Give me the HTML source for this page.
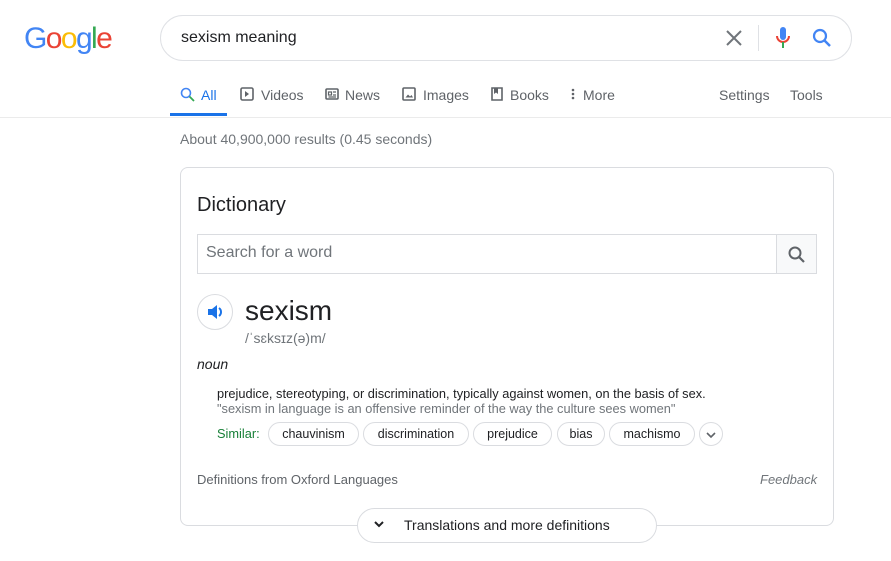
<!DOCTYPE html>
<html><head><meta charset="utf-8"><style>
*{margin:0;padding:0;box-sizing:border-box}
body{width:891px;height:561px;background:#fff;font-family:"Liberation Sans",Arial,sans-serif;position:relative;overflow:hidden;color:#202124}
.abs{position:absolute}
.logo{left:24px;top:22px;font-size:30px;letter-spacing:-1.6px;font-family:"Liberation Sans",sans-serif}
.search{left:160px;top:15px;width:692px;height:46px;border:1px solid #dfe1e5;border-radius:24px}
.tabs span{position:absolute;top:87px;font-size:14px;color:#5f6368}
.tabs svg{position:absolute;top:87px}
.chip{position:absolute;top:422px;border:1px solid #dadce0;border-radius:16px;height:24px;line-height:22px;text-align:center;font-size:12.5px;color:#202124}
</style></head><body>
<div class="abs logo"><span style="color:#4285f4">G</span><span style="color:#ea4335">o</span><span style="color:#fbbc05">o</span><span style="color:#4285f4">g</span><span style="color:#34a853">l</span><span style="color:#ea4335">e</span></div>
<div class="abs search"></div>
<div class="abs" style="left:181px;top:29px;font-size:16px">sexism meaning</div>
<svg class="abs" style="left:725px;top:29px" width="18" height="18"><path d="M2 2L16 16M16 2L2 16" stroke="#70757a" stroke-width="2"/></svg>
<div class="abs" style="left:758px;top:25px;width:1px;height:26px;background:#dfe1e5"></div>
<svg class="abs" style="left:775px;top:26px" width="16" height="24"><rect x="5" y="1" width="6" height="13" rx="3" fill="#4285f4"/><path d="M2 10a6 6 0 0 0 12 0" stroke="#ea4335" stroke-width="2" fill="none"/><rect x="7" y="16" width="2" height="6" fill="#34a853"/></svg>
<svg class="abs" style="left:812px;top:28px" width="20" height="20"><circle cx="8" cy="8" r="6" stroke="#4285f4" stroke-width="2.2" fill="none"/><path d="M12.5 12.5L18 18" stroke="#4285f4" stroke-width="2.5"/></svg>
<div class="tabs">
<svg style="left:180px" width="15" height="15"><circle cx="6" cy="6" r="4.5" stroke="#4285f4" stroke-width="1.6" fill="none"/><path d="M9.5 9.5L14 14" stroke="#34a853" stroke-width="1.8"/></svg>
<span style="left:201px;color:#1a73e8">All</span>
<svg style="left:240px" width="14" height="14"><rect x="1" y="1" width="12" height="12" rx="1.5" stroke="#5f6368" stroke-width="1.6" fill="none"/><path d="M5 4l4 3-4 3z" fill="#5f6368"/></svg>
<span style="left:261px">Videos</span>
<svg style="left:325px" width="14" height="14"><rect x="1" y="2" width="12" height="10" rx="1" stroke="#5f6368" stroke-width="1.6" fill="none"/><path d="M3.5 5h3v3h-3zM8 5h3M8 8h3M3.5 10h7.5" stroke="#5f6368" stroke-width="1.2" fill="none"/></svg>
<span style="left:345px">News</span>
<svg style="left:402px" width="14" height="14"><rect x="1" y="1" width="12" height="12" rx="1" stroke="#5f6368" stroke-width="1.6" fill="none"/><path d="M3.5 10.5l2.5-3 2 2 1.5-1.5 1.5 2.5z" fill="#5f6368"/></svg>
<span style="left:423px">Images</span>
<svg style="left:491px" width="12" height="14"><path d="M1 1h10v12H1z" stroke="#5f6368" stroke-width="1.6" fill="none"/><path d="M3 1h4v6l-2-1.5L3 7z" fill="#5f6368"/></svg>
<span style="left:510px">Books</span>
<svg style="left:571px" width="4" height="14"><circle cx="2" cy="3" r="1.3" fill="#5f6368"/><circle cx="2" cy="7" r="1.3" fill="#5f6368"/><circle cx="2" cy="11" r="1.3" fill="#5f6368"/></svg>
<span style="left:583px">More</span>
<span style="left:719px">Settings</span>
<span style="left:790px">Tools</span>
</div>
<div class="abs" style="left:170px;top:113px;width:57px;height:3px;background:#1a73e8"></div>
<div class="abs" style="left:0;top:117px;width:891px;height:1px;background:#ebebeb"></div>
<div class="abs" style="left:180px;top:131px;font-size:14px;color:#70757a">About 40,900,000 results (0.45 seconds)</div>
<div class="abs" style="left:180px;top:167px;width:654px;height:359px;border:1px solid #dadce0;border-radius:8px"></div>
<div class="abs" style="left:197px;top:194px;font-size:20px">Dictionary</div>
<div class="abs" style="left:197px;top:234px;width:620px;height:40px;border:1px solid #dadce0"></div>
<div class="abs" style="left:776px;top:234px;width:41px;height:40px;border:1px solid #dadce0;background:#f8f9fa"></div>
<svg class="abs" style="left:787px;top:245px" width="20" height="20"><circle cx="8" cy="8" r="5.5" stroke="#5f6368" stroke-width="2" fill="none"/><path d="M12 12L17 17" stroke="#5f6368" stroke-width="2.2"/></svg>
<div class="abs" style="left:206px;top:244px;font-size:16px;color:#70757a">Search for a word</div>
<div class="abs" style="left:197px;top:294px;width:36px;height:36px;border:1px solid #dadce0;border-radius:50%"></div>
<svg class="abs" style="left:206px;top:303px" width="18" height="18"><path d="M2 6h4l5-4v14l-5-4H2z" fill="#1a73e8"/><path d="M13 5a5 5 0 0 1 0 8" stroke="#1a73e8" stroke-width="2" fill="none"/></svg>
<div class="abs" style="left:245px;top:295px;font-size:28px">sexism</div>
<div class="abs" style="left:245px;top:330px;font-size:14px;color:#70757a">/ˈsɛksɪz(ə)m/</div>
<div class="abs" style="left:197px;top:356px;font-size:14px;font-style:italic">noun</div>
<div class="abs" style="left:217px;top:386px;font-size:12.8px">prejudice, stereotyping, or discrimination, typically against women, on the basis of sex.</div>
<div class="abs" style="left:217px;top:401px;font-size:12.8px;color:#70757a">"sexism in language is an offensive reminder of the way the culture sees women"</div>
<div class="abs" style="left:217px;top:426px;font-size:12.8px;color:#188038">Similar:</div>
<div class="chip" style="left:268px;width:91px">chauvinism</div>
<div class="chip" style="left:363px;width:106px">discrimination</div>
<div class="chip" style="left:473px;width:79px">prejudice</div>
<div class="chip" style="left:557px;width:48px">bias</div>
<div class="chip" style="left:609px;width:86px">machismo</div>
<div class="chip" style="left:699px;width:24px"><svg width="10" height="8" style="vertical-align:middle"><path d="M1 2l4 4 4-4" stroke="#5f6368" stroke-width="1.6" fill="none"/></svg></div>
<div class="abs" style="left:197px;top:472px;font-size:13px;color:#5f6368">Definitions from Oxford Languages</div>
<div class="abs" style="left:760px;top:472px;font-size:13px;font-style:italic;color:#70757a">Feedback</div>
<div class="abs" style="left:357px;top:508px;width:300px;height:35px;border:1px solid #dadce0;border-radius:18px;background:#fff"></div>
<svg class="abs" style="left:373px;top:520px" width="12" height="10"><path d="M2 2l4 4 4-4" stroke="#202124" stroke-width="2" fill="none"/></svg>
<div class="abs" style="left:404px;top:517px;font-size:14px">Translations and more definitions</div>
</body></html>
